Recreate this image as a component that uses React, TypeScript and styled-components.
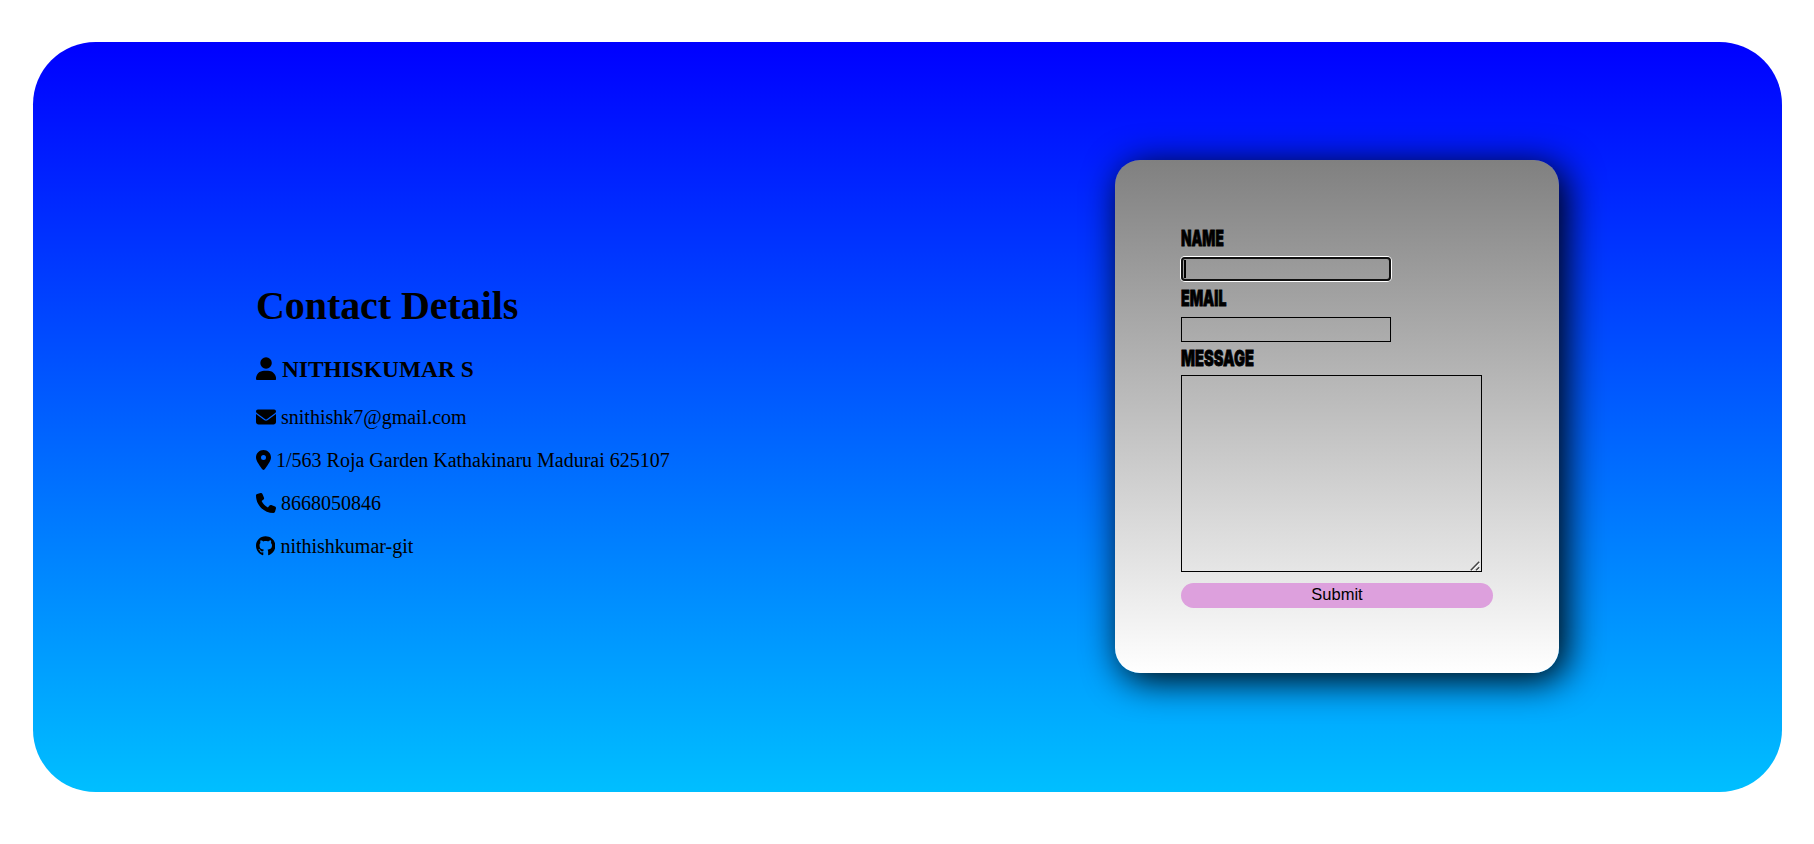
import React from "react";
import styled, { createGlobalStyle } from "styled-components";
import { FaUser, FaEnvelope, FaLocationDot, FaPhone, FaGithub } from "react-icons/fa6";

const GlobalStyle = createGlobalStyle`
  *, *::before, *::after { box-sizing: border-box; }
  body { margin: 0; background: #fff; font-family: "Times New Roman", "Liberation Serif", serif; color: #000; }
`;

const Page = styled.main`
  height: 844px;
  padding: 42px 32px 0 33px;
`;

const Panel = styled.section`
  display: flex;
  justify-content: space-between;
  height: 750px;
  padding: 118px 223px 0;
  border-radius: 62.5px;
  background: linear-gradient(blue, deepskyblue);
`;

const Details = styled.div`
  padding-top: 123px;
  font-size: 20px;
`;

const Title = styled.h1`
  margin: 0 0 27px;
  font-size: 40px;
  line-height: 46px;
  letter-spacing: -0.07px;
`;

const Person = styled.h3`
  display: flex;
  align-items: center;
  gap: 5.85px;
  margin: 0 0 23px;
  font-size: 23.4px;
  line-height: 27px;
`;

const Line = styled.p`
  display: flex;
  align-items: center;
  gap: 5px;
  margin: 0 0 20px;
  line-height: 23px;
`;

const Glyph = styled.span<{ $w: number }>`
  display: flex;
  width: ${(p) => p.$w}em;
  margin-bottom: 2px;
  svg { flex: none; width: 100%; height: 1em; }
`;

const Card = styled.form`
  display: flex;
  flex-direction: column;
  width: 444px;
  height: 513px;
  padding: 63px 66px 0;
  border-radius: 25px;
  background: linear-gradient(gray, white);
  box-shadow: 6.25px 6.25px 37.5px black;
`;

const Label = styled.label<{ $squeeze: number }>`
  align-self: flex-start;
  height: 34px;
  font: 900 21.5px/30px Inter, sans-serif;
  -webkit-text-stroke: 0.8px #000;
  transform: scaleX(${(p) => p.$squeeze});
  transform-origin: left;
`;

const Field = styled.input`
  width: 210px;
  height: 25px;
  margin: 0 0 1px;
  padding: 1px 2px;
  border: 1px solid #000;
  background: transparent;
  outline: none;
`;

const ActiveField = styled.div`
  width: 210px;
  height: 24px;
  margin-bottom: 2px;
  padding: 1px;
  border: 2px solid #101010;
  border-radius: 4px;
  box-shadow: 0 0 0 1px #fff;
`;

const Caret = styled.span`
  display: block;
  width: 2px;
  height: 18px;
  background: #000;
`;

const MessageBox = styled.div`
  position: relative;
  width: 301px;
  height: 197px;
  margin: -2px 0 11px;
`;

const Message = styled.textarea`
  display: block;
  width: 100%;
  height: 100%;
  border: 1px solid #000;
  background: transparent;
  resize: none;
`;

const Grip = styled.svg`
  position: absolute;
  right: 2px;
  bottom: 1px;
  width: 10px;
  height: 10px;
`;

const Submit = styled.button`
  width: 312px;
  height: 25px;
  padding: 0 0 2px;
  border: 0;
  border-radius: 12.5px;
  background: plum;
  color: #000;
  font: 16.5px/23px Arial, "Liberation Sans", sans-serif;
`;

export default function App() {
  return (
    <Page>
      <GlobalStyle />
      <Panel>
        <Details>
          <Title>Contact Details</Title>
          <Person><Glyph $w={0.86}><FaUser /></Glyph>NITHISKUMAR S</Person>
          <Line><Glyph $w={1}><FaEnvelope /></Glyph>snithishk7@gmail.com</Line>
          <Line><Glyph $w={0.75}><FaLocationDot /></Glyph>1/563 Roja Garden Kathakinaru Madurai 625107</Line>
          <Line><Glyph $w={1}><FaPhone /></Glyph>8668050846</Line>
          <Line><Glyph $w={0.969}><FaGithub /></Glyph>nithishkumar-git</Line>
        </Details>
        <Card>
          <Label $squeeze={0.635}>NAME</Label>
          <ActiveField><Caret /></ActiveField>
          <Label $squeeze={0.655}>EMAIL</Label>
          <Field type="email" />
          <Label $squeeze={0.68}>MESSAGE</Label>
          <MessageBox>
            <Message />
            <Grip viewBox="0 0 10 10" fill="none">
              <path d="M2 9.8 9.8 2.2M7 9.8l2.8-2.6" stroke="#fff" strokeWidth="1" />
              <path d="M0.8 9.2 9.2 0.8M6 9.2l3.2-3" stroke="#444" strokeWidth="1.5" />
            </Grip>
          </MessageBox>
          <Submit type="button">Submit</Submit>
        </Card>
      </Panel>
    </Page>
  );
}
